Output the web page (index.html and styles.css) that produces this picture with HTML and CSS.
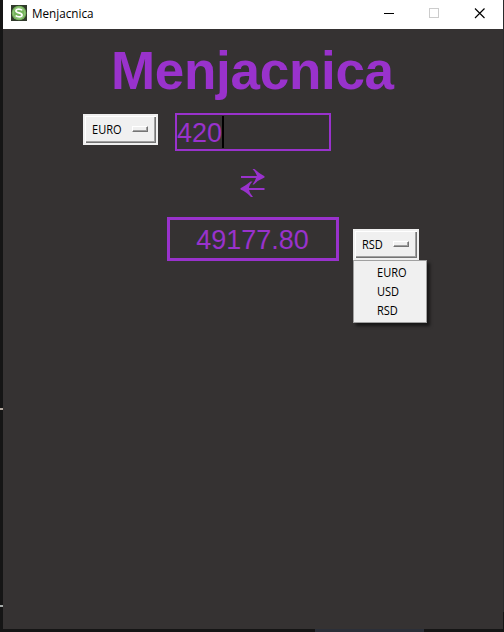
FILE: index.html
```html
<!DOCTYPE html>
<html lang="sr">
<head>
<meta charset="utf-8">
<title>Menjacnica</title>
<link rel="stylesheet" href="styles.css">
</head>
<body>
<div class="window">
  <header class="titlebar">
    <svg class="app-icon" width="16" height="16" viewBox="0 0 16 16"><rect width="16" height="16" fill="#303a2b"/><circle cx="8" cy="8" r="7.3" fill="#75b45b"/><circle cx="8" cy="8" r="5.700" fill="none" stroke="#a4cf92" stroke-width=".6"/><path d="M11.200 5.400C10 3.700 5 3.500 4.900 6C4.900 8.300 11.200 7.500 11.100 10C11 12.600 6 12.200 4.700 10.500" fill="none" stroke="#fff" stroke-width="1.600"/></svg>
    <span class="caption">Menjacnica</span>
    <svg class="controls" width="138" height="29" viewBox="0 0 138 29" fill="none" shape-rendering="crispEdges"><path d="M19 13.500h10" stroke="#000"/><rect x="64.500" y="8.500" width="9" height="9" stroke="#ccc"/><path d="M110 8.500l9.500 9.500M119.500 8.500L110 18" stroke="#000" stroke-width="1.150" shape-rendering="auto"/></svg>
  </header>
  <main class="content">
    <h1>Menjacnica</h1>
    <div class="row source">
      <div class="option wide"><span class="label">EURO</span><i class="indicator"></i></div>
      <div class="entry">420<i class="caret"></i></div>
    </div>
    <svg class="swap" width="26" height="30" viewBox="0 0 26 30" fill="#9932cc"><path d="M1 8H17Q16 4.500 12.500 1H14.500Q19 5.500 24.500 8.200V9.500Q18 12 14 16.500H12.500Q15 13.500 16 10H1Z"/><path d="M24.500 20H9Q9 17 12.500 13.500H10.500Q6 17.500 .5 20.200V21.500Q6 23.500 11 29H13Q9.500 25 9 22H24.500Z"/></svg>
    <div class="row target">
      <div class="result">49177.80</div>
      <div class="picker">
        <div class="option"><span class="label">RSD</span><i class="indicator"></i></div>
        <ul class="menu"><li><span class="label">EURO</span></li><li><span class="label">USD</span></li><li><span class="label">RSD</span></li></ul>
      </div>
    </div>
  </main>
</div>
</body>
</html>
```
FILE: styles.css
```css
* { box-sizing: border-box; }
body {
  margin: 0;
  height: 632px;
  padding: 0 1px 3px 3px;
  overflow: hidden;
  background:
    linear-gradient(#b5aaa0, #b5aaa0) 0 408px / 3px 2px no-repeat,
    linear-gradient(#a5aaa8, #a5aaa8) 0 605px / 3px 2px no-repeat,
    linear-gradient(#2b2f38, #2b2f38) 315px 629px / 109px 3px no-repeat,
    linear-gradient(#2a2b2c, #2a2b2c) 503px 0 / 1px 612px no-repeat,
    #151515;
  font-family: "Open Sans", "Noto Sans", sans-serif;
  font-size: 12px;
  color: #000;
}
.window { height: 629px; background: #353232; }
.titlebar {
  display: flex;
  align-items: flex-start;
  height: 29px;
  background: #fff;
}
.app-icon { margin: 5px 0 0 8px; }
.caption {
  margin: 5px 0 0 5px;
  line-height: 17px;
  transform: scaleX(.975);
  transform-origin: left;
}
.controls { margin-left: auto; }
.content { display: flex; flex-direction: column; }
h1 {
  margin: 11px 0 0 108px;
  font: bold 53px/62px "Liberation Sans", Arial, sans-serif;
  letter-spacing: -.3px;
  color: #9932cc;
}
.row { display: flex; align-items: flex-start; }
.source { margin: 11px 0 0 80px; gap: 17px; }
.option {
  display: flex;
  align-items: center;
  width: 66px;
  height: 31px;
  padding: 0 6px 0 7px;
  border: 2px solid #f0f0f0;
  background: #f0f0f0;
  box-shadow: inset 1px 1px #fff, inset -1px -1px #747474, inset -2px -2px #a0a0a0;
}
.wide { width: 75px; }
.source .option { margin-top: 1px; }
.label {
  line-height: 19px;
  transform: scaleX(.92);
  transform-origin: left;
}
.indicator {
  width: 16px;
  height: 6px;
  margin: -1px 2px 0 auto;
  border: 1px solid;
  border-color: #fff #747474 #747474 #fff;
  box-shadow: inset -1px -1px #a0a0a0;
}
.entry {
  display: flex;
  align-items: center;
  width: 156px;
  height: 38px;
  padding-top: 1px;
  border: 2px solid #9932cc;
  font: 27px/36px "Liberation Sans", Arial, sans-serif;
  color: #9932cc;
}
.caret { width: 2px; height: 32px; margin-top: -1px; background: #000; }
.swap { margin: 17px 0 0 237px; }
.target { margin: 19px 0 0 164px; gap: 14px; }
.result {
  width: 172px;
  height: 44px;
  padding-right: 1px;
  border: 3px solid #9932cc;
  text-align: center;
  font: 27px/40px "Liberation Sans", Arial, sans-serif;
  color: #9932cc;
}
.picker { position: relative; margin-top: 12px; }
.menu {
  position: absolute;
  top: 31px;
  left: 0;
  width: 74px;
  height: 63px;
  margin: 0;
  padding: 2px 0 0 23px;
  border: 1px solid #a0a0a0;
  background: #f0f0f0;
  box-shadow: 3px 3px 3px rgba(0, 0, 0, .55);
  list-style: none;
}
.menu li { display: flex; height: 19px; }
```
